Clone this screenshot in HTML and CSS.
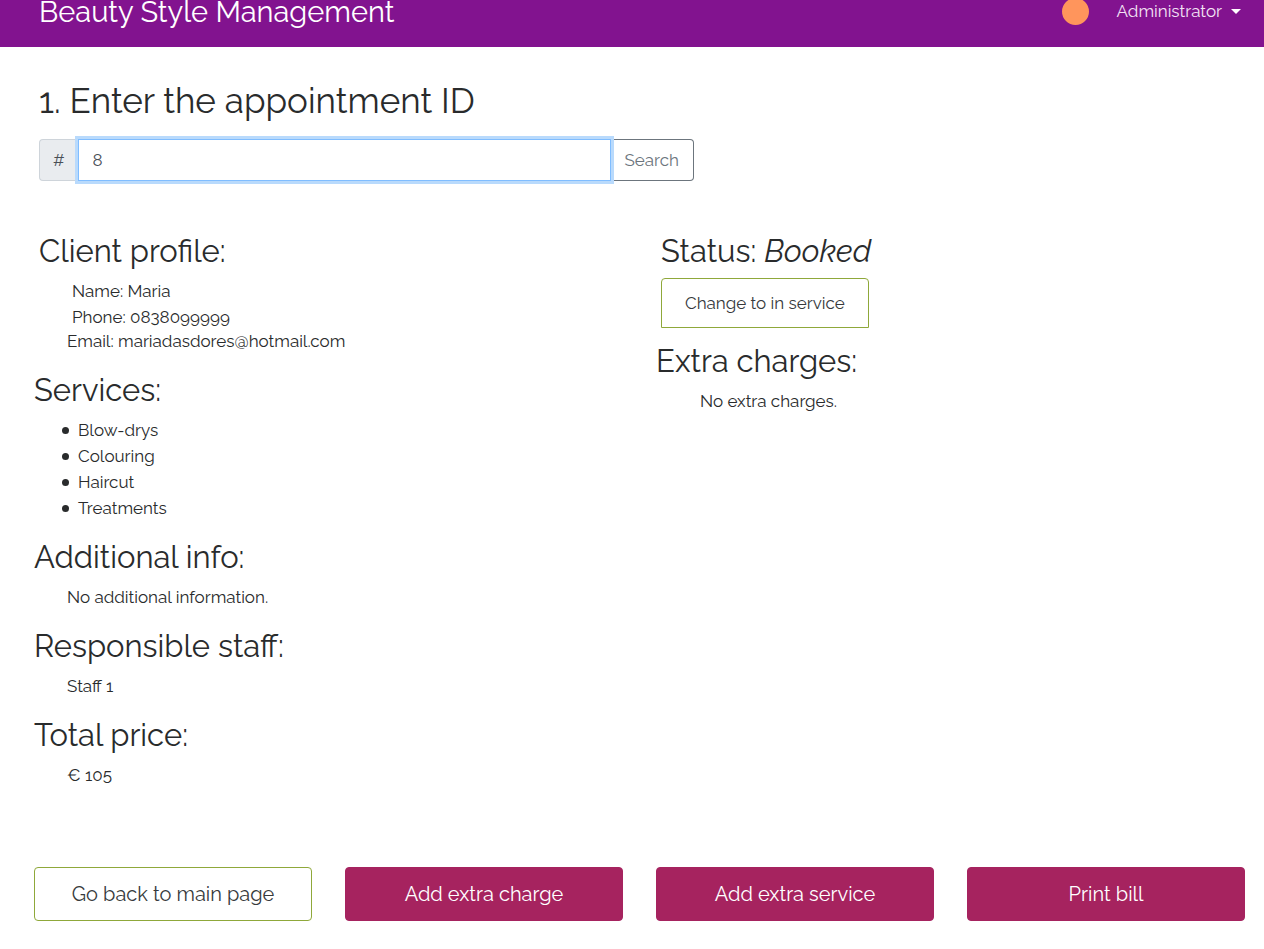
FILE: index.html
```html
<!DOCTYPE html>
<html lang="en">
<head>
<meta charset="utf-8">
<title>Beauty Style Management</title>
<link rel="stylesheet" href="styles.css">
</head>
<body>
<header class="topbar">
  <div class="brand">Beauty Style Management</div>
  <div class="account">
    <span class="avatar"></span>
    <button class="account-menu" type="button">Administrator <span class="caret"></span></button>
  </div>
</header>
<main class="page">
  <form class="lookup">
    <h1><label for="appointment">1. Enter the appointment ID</label></h1>
    <div class="input-group">
      <span class="prefix">#</span>
      <input class="field" id="appointment" type="text" value="8">
      <button class="search" type="button">Search</button>
    </div>
  </form>
  <div class="columns">
    <div class="stack">
      <section>
        <div class="inset">
          <h2>Client profile:</h2>
          <div class="contact">
            <p>Name: Maria</p>
            <p>Phone: 0838099999</p>
          </div>
        </div>
        <p class="detail">Email: mariadasdores@hotmail.com</p>
      </section>
      <section>
        <h2>Services:</h2>
        <ul class="services">
          <li>Blow-drys</li>
          <li>Colouring</li>
          <li>Haircut</li>
          <li>Treatments</li>
        </ul>
      </section>
      <section>
        <h2>Additional info:</h2>
        <p class="detail">No additional information.</p>
      </section>
      <section>
        <h2>Responsible staff:</h2>
        <p class="detail">Staff 1</p>
      </section>
      <section>
        <h2>Total price:</h2>
        <p class="detail">€ 105</p>
      </section>
    </div>
    <div class="stack status-stack">
      <section class="inset">
        <h2>Status: <em>Booked</em></h2>
        <button class="status-button" type="button">Change to in service</button>
      </section>
      <section>
        <h2>Extra charges:</h2>
        <p class="charges">No extra charges.</p>
      </section>
    </div>
  </div>
  <div class="actions">
    <button class="action outline" type="button">Go back to main page</button>
    <button class="action" type="button">Add extra charge</button>
    <button class="action" type="button">Add extra service</button>
    <button class="action" type="button">Print bill</button>
  </div>
</main>
</body>
</html>
```

FILE: styles.css
```css
* { box-sizing: border-box; }

body {
  margin: 0;
  background: #fff;
  color: #292b2c;
  font-family: Raleway, Lato, sans-serif;
  font-size: 17px;
  line-height: 26px;
}

h1, h2, p, ul { margin: 0; padding: 0; }
h1, h2 { font-weight: 400; }
h1 { font-size: 35px; line-height: 44px; margin-bottom: 16px; }
h2 { font-size: 31px; line-height: 36px; margin-bottom: 9px; }

button, input {
  font: inherit;
  margin: 0;
}

.topbar {
  display: flex;
  justify-content: space-between;
  align-items: flex-start;
  padding: 0 23px 22px 39px;
  background: #82138f;
  color: #fff;
}
.brand { font-size: 29px; line-height: 25px; }
.account { display: flex; align-items: center; gap: 28px; }
.avatar {
  width: 27px;
  height: 27px;
  margin: -2px 0;
  border-radius: 50%;
  background: #ff955c;
}
.account-menu {
  display: flex;
  align-items: center;
  gap: 9px;
  padding: 0;
  border: 0;
  background: none;
  color: #f3e3f5;
  line-height: 23px;
}
.caret {
  border: 5px solid transparent;
  border-top-color: #fff;
  border-bottom: 0;
}

.page { padding: 32px 19px 28px 34px; }
.lookup { padding-left: 5px; margin-bottom: 52px; }
.input-group { display: flex; max-width: 655px; }
.prefix {
  padding: 7px 13px;
  border: 1px solid #ced4da;
  border-right: 0;
  border-radius: 4px 0 0 4px;
  background: #e9ecef;
  color: #495057;
}
.field {
  flex: 1;
  min-width: 0;
  padding: 7px 14px;
  border: 1px solid #80bdff;
  border-radius: 0;
  outline: 0;
  background: #fff;
  box-shadow: 0 0 0 3px #b9dafc;
  color: #495057;
  z-index: 1;
}
.search {
  padding: 7px 14px;
  border: 1px solid #6c757d;
  border-left: 0;
  border-radius: 0 4px 4px 0;
  background: #fff;
  color: #6c757d;
}

.columns {
  display: grid;
  grid-template-columns: 1fr 1fr;
  column-gap: 33px;
}
.stack { display: flex; flex-direction: column; gap: 18px; }
.status-stack { gap: 15px; }
.inset { padding-left: 5px; }
.contact {
  display: flex;
  flex-direction: column;
  gap: 5px;
  padding: 3px 0 0 33px;
  line-height: 21px;
}
.detail { padding-left: 33px; }
.charges { padding-left: 44px; }
.services { padding-left: 28px; list-style: none; }
.services li { display: flex; align-items: center; gap: 9px; }
.services li::before {
  content: "";
  width: 7px;
  height: 7px;
  border-radius: 50%;
  background: #292b2c;
}

.status-button {
  display: block;
  padding: 11px 23px;
  border: 1px solid #8fa83a;
  border-radius: 4px 4px 0 0;
  background: #fff;
  color: #373a3c;
}

.actions {
  display: grid;
  grid-template-columns: repeat(4, 1fr);
  gap: 33px;
  margin-top: 79px;
}
.action {
  padding: 13px 8px;
  border: 1px solid #a6235f;
  border-radius: 4px;
  background: #a6235f;
  color: #fff;
  font-size: 20px;
}
.outline {
  border-color: #8fa83a;
  background: #fff;
  color: #373a3c;
}
```
